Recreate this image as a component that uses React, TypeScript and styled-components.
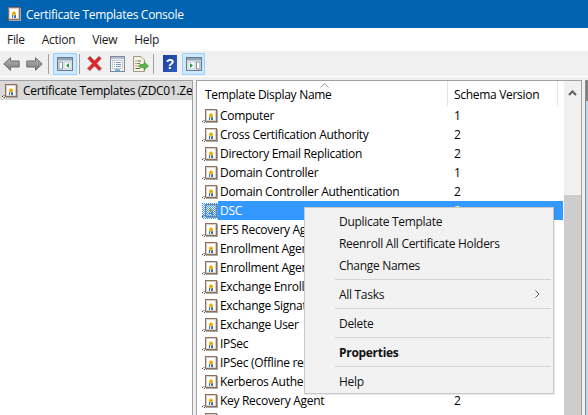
import React from 'react';
import styled, { createGlobalStyle } from 'styled-components';

const Global = createGlobalStyle`
  html, body { margin: 0; padding: 0; background: #f0f0f0; }
  * { box-sizing: border-box; }
`;
const FONT = `"Open Sans", "Noto Sans", "Liberation Sans", sans-serif`;

const Win = styled.div`
  width: 588px; height: 415px; overflow: hidden; display: flex; flex-direction: column;
  font-family: ${FONT}; font-size: 12px; letter-spacing: -0.3px; color: #000; background: #f0f0f0;
`;
const TitleBar = styled.div`
  height: 28px; flex: none; background: #0063b1; color: #fff; display: flex; align-items: center;
  padding-left: 5px; gap: 5px;
`;
const MenuBar = styled.div`
  height: 23px; flex: none; background: #fff; display: flex; align-items: center; padding-left: 7px; gap: 17px;
`;
const MenuLabel = styled.span`color: #1a1a1a;`;
const Toolbar = styled.div`
  height: 25px; flex: none; background: #f0f0f0; display: flex; align-items: center; padding-left: 2px;
`;
const ToolBtn = styled.div<{ $w: number; $active?: boolean; $ml?: number }>`
  width: ${p => p.$w}px; height: 22px; margin-left: ${p => p.$ml ?? 0}px; display: flex; align-items: center; justify-content: center; flex: none;
  background: ${p => (p.$active ? '#cce8ff' : 'transparent')};
  border: 1px solid ${p => (p.$active ? '#99d1ff' : 'transparent')};
`;
const ToolSep = styled.div<{ $ml: number }>`
  width: 1px; height: 20px; background: #a0a0a0; margin-left: ${p => p.$ml}px; flex: none;
`;
const Panes = styled.div`
  flex: 1; min-height: 0; display: flex; padding-top: 4px; background: #f0f0f0; position: relative;
  box-shadow: inset 0 1px 0 #fff;
`;
const TreePane = styled.div`
  width: 193px; flex: none; background: #fff; border-top: 1px solid #a0a0a0; border-right: 1px solid #a0a0a0;
`;
const TreeRow = styled.div`
  height: 19px; background: #d9d9d9; display: flex; align-items: center; padding-left: 2px; gap: 5px; white-space: nowrap; overflow: hidden;
`;
const ListPane = styled.div`
  position: relative; width: 386px; margin-left: 3px; flex: none; background: #fff; display: flex;
  border: 1px solid #a0a0a0; border-bottom: none;
`;
const SidePane = styled.div`
  width: 3px; margin-left: 3px; flex: none; background: #b7d8f2; border-left: 1px solid #8c8c8c; border-top: 1px solid #8c8c8c;
`;
const SideHead = styled.div`height: 20px; background: #7f7f7f;`;
const ListBody = styled.div`flex: 1; min-width: 0; overflow: hidden;`;
const Header = styled.div`
  height: 25px; display: flex; position: relative;
`;
const HeadCell = styled.div<{ $w: number; $pad: number }>`
  width: ${p => p.$w}px; flex: none; padding-left: ${p => p.$pad}px; padding-top: 5px; border-right: 1px solid #e5e5e5; white-space: nowrap;
`;
const SortMark = styled.svg`
  position: absolute; left: 123px; top: 2px;
`;
const Row = styled.div`
  height: 19px; display: flex; align-items: center; padding-left: 5px;
`;
const IconSlot = styled.div`width: 16px; height: 16px; flex: none; display: flex; align-items: center; justify-content: center;`;
const NameCell = styled.div<{ $sel?: boolean }>`
  width: 345px; flex: none; height: 19px; display: flex; align-items: center; padding-left: 2px; white-space: nowrap; position: relative;
  background: ${p => (p.$sel ? '#3399ff' : 'transparent')}; color: ${p => (p.$sel ? '#fff' : '#000')};
`;
const Version = styled.span`position: absolute; left: 236px;`;
const ScrollBar = styled.div`
  width: 17px; flex: none; background: #f0f0f0; display: flex; flex-direction: column; margin-left: -1px;
`;
const ScrollBtn = styled.div`height: 24px; flex: none; display: flex; align-items: center; justify-content: center;`;
const ScrollTrack = styled.div`height: 90px; flex: none;`;
const ScrollThumb = styled.div`flex: 1; background: #cdcdcd;`;
const Menu = styled.div`
  position: absolute; left: 107px; top: 126px; width: 250px; height: 187px; background: #f2f2f2;
  border: 1px solid #c8c8c8; padding: 2px 2px 1px 0; box-shadow: 1px 1px 1px rgba(0,0,0,0.08); color: #111;
`;
const MenuItem = styled.div<{ $bold?: boolean }>`
  height: 22px; display: flex; align-items: center; justify-content: space-between; padding: 0 11px 0 34px;
  font-weight: ${p => (p.$bold ? 700 : 400)}; white-space: nowrap;
`;
const MenuSep = styled.div`height: 1px; background: #d4d4d4; margin: 3px 0 3px 30px;`;

const Cert = ({ sel }: { sel?: boolean }) => (
  <svg width="16" height="16" viewBox="0 0 16 16" style={{ flex: 'none' }}>
    <path d="M0 13.5 H1 M1.5 12.5 H2.5 M2 14.5 H3" stroke="#444" strokeWidth="1" />
    <rect x="3" y="1" width="12" height="13" fill="#8e6f60" />
    <rect x="15" y="2" width="1" height="13" fill="#a8a8a8" />
    <rect x="4" y="14" width="12" height="1" fill="#a8a8a8" />
    <rect x="4" y="2" width="10" height="11" fill="#d9cfc4" />
    <rect x="5" y="3" width="8" height="9" fill="#fff" />
    <rect x="7" y="9" width="1" height="3" fill="#2f6fd0" />
    <rect x="9" y="9" width="2" height="3" fill="#2f6fd0" />
    <path d="M9 5 L11 6.5 L11 8.5 L9 10 L7 8.5 L7 6.5 Z" fill="#f6b91a" />
    <rect x="8.5" y="7" width="1" height="1" fill="#b8720a" />
    {sel && (
      <>
        <defs>
          <pattern id="selp" width="2" height="2" patternUnits="userSpaceOnUse">
            <rect x="0" y="0" width="1" height="1" fill="#3399ff" />
            <rect x="1" y="1" width="1" height="1" fill="#3399ff" />
          </pattern>
        </defs>
        <rect x="0" y="0" width="16" height="16" fill="url(#selp)" />
      </>
    )}
  </svg>
);

const Arrow = ({ flip }: { flip?: boolean }) => (
  <svg width="17" height="14" viewBox="0 0 17 14" style={flip ? { transform: 'scaleX(-1)' } : undefined}>
    <defs>
      <linearGradient id="ga" x1="0" y1="0" x2="0" y2="1">
        <stop offset="0" stopColor="#b4b4b4" />
        <stop offset="1" stopColor="#7d7d7d" />
      </linearGradient>
    </defs>
    <path d="M0.7 7 L7.5 0.7 V4 H16.2 V10 H7.5 V13.3 Z" fill="url(#ga)" stroke="#6e6e6e" strokeWidth="1" strokeLinejoin="round" />
  </svg>
);
const PaneIcon = ({ right }: { right?: boolean }) => (
  <svg width="16" height="14" viewBox="0 0 16 14">
    <rect x="0.5" y="0.5" width="15" height="13" fill="#f4f4f4" stroke="#6b7b8c" />
    <rect x="1" y="1" width="14" height="2.5" fill="#8fa3b8" />
    {right ? (
      <>
        <rect x="2" y="5" width="7" height="7" fill="#fff" stroke="#9ab" strokeWidth="0.6" />
        <rect x="10.5" y="5" width="3.5" height="7" fill="#fff" stroke="#6a7f96" strokeWidth="0.8" />
        <path d="M4 6 L7 8.5 L4 11 Z" fill="#1e9c3a" />
      </>
    ) : (
      <>
        <rect x="2" y="5" width="3.5" height="7" fill="#fff" stroke="#6a7f96" strokeWidth="0.8" />
        <rect x="7" y="5" width="7" height="7" fill="#fff" stroke="#9ab" strokeWidth="0.6" />
        <path d="M12 6 L9 8.5 L12 11 Z" fill="#1e9c3a" />
      </>
    )}
  </svg>
);
const XIcon = () => (
  <svg width="17" height="17" viewBox="0 0 17 17">
    <path d="M1.5 3.5 L4 1 L8.5 5.5 L13 1 L15.5 3.5 L11 8.5 L15.8 13.5 L13.3 16 L8.5 11.3 L3.7 16 L1.2 13.5 L6 8.5 Z" fill="#e0242b" stroke="#aaa" strokeWidth="0.8" />
  </svg>
);
const PropsIcon = () => (
  <svg width="15" height="16" viewBox="0 0 15 16">
    <rect x="0.5" y="0.5" width="14" height="15" fill="#f2f2f2" stroke="#7d8a99" />
    <rect x="1" y="1" width="13" height="2" fill="#b6c0cc" />
    <rect x="2.5" y="4.5" width="10" height="8" fill="#fff" stroke="#b0b8c2" strokeWidth="0.7" />
    <path d="M4 6.5 H5 M6 6.5 H11 M4 8.5 H5 M6 8.5 H11 M4 10.5 H5 M6 10.5 H11" stroke="#5a7ca8" strokeWidth="0.8" />
    <rect x="5" y="13.3" width="5" height="1.4" fill="#2f9fe0" />
  </svg>
);
const ExportIcon = () => (
  <svg width="17" height="16" viewBox="0 0 17 16">
    <path d="M1.5 0.5 H9 L12.5 4 V15.5 H1.5 Z" fill="#f6f3dc" stroke="#9a9a88" />
    <path d="M3.5 5 H4.5 M5.5 5 H9 M3.5 7.5 H4.5 M5.5 7.5 H8 M3.5 10 H4.5 M5.5 10 H8 M3.5 12.5 H8" stroke="#555" strokeWidth="0.9" />
    <path d="M8 8.5 H12 V6 L16.5 10 L12 14 V11.5 H8 Z" fill="#55b848" stroke="#3a8f34" strokeWidth="0.7" />
  </svg>
);
const HelpIcon = () => (
  <svg width="14" height="17" viewBox="0 0 14 17">
    <defs>
      <linearGradient id="gh" x1="0" y1="0" x2="1" y2="1">
        <stop offset="0" stopColor="#1d3f98" />
        <stop offset="1" stopColor="#2b5cc0" />
      </linearGradient>
    </defs>
    <rect x="0" y="0" width="14" height="17" fill="url(#gh)" />
    <text x="7" y="14" textAnchor="middle" fontSize="14" fontWeight="700" fill="#fff" fontFamily="Liberation Sans">?</text>
  </svg>
);

const rows: [string, string][] = [
  ['Computer', '1'],
  ['Cross Certification Authority', '2'],
  ['Directory Email Replication', '2'],
  ['Domain Controller', '1'],
  ['Domain Controller Authentication', '2'],
  ['DSC', '2'],
  ['EFS Recovery Agent', ''],
  ['Enrollment Agent', ''],
  ['Enrollment Agent (Computer)', ''],
  ['Exchange Enrollment Agent', ''],
  ['Exchange Signature Only', ''],
  ['Exchange User', ''],
  ['IPSec', ''],
  ['IPSec (Offline request)', ''],
  ['Kerberos Authentication', ''],
  ['Key Recovery Agent', '2'],
  ['', ''],
];

export default function App() {
  return (
    <Win>
      <Global />
      <TitleBar>
        <Cert />
        <span>Certificate Templates Console</span>
      </TitleBar>
      <MenuBar>
        <MenuLabel>File</MenuLabel>
        <MenuLabel>Action</MenuLabel>
        <MenuLabel>View</MenuLabel>
        <MenuLabel>Help</MenuLabel>
      </MenuBar>
      <Toolbar>
        <ToolBtn $w={19}><Arrow /></ToolBtn>
        <ToolBtn $w={19} $ml={4}><Arrow flip /></ToolBtn>
        <ToolSep $ml={4} />
        <ToolBtn $w={24} $active $ml={4}><PaneIcon /></ToolBtn>
        <ToolSep $ml={2} />
        <ToolBtn $w={19} $ml={5}><XIcon /></ToolBtn>
        <ToolBtn $w={19} $ml={4}><PropsIcon /></ToolBtn>
        <ToolBtn $w={19} $ml={4}><ExportIcon /></ToolBtn>
        <ToolSep $ml={3} />
        <ToolBtn $w={18} $ml={7}><HelpIcon /></ToolBtn>
        <ToolBtn $w={23} $active $ml={3}><PaneIcon right /></ToolBtn>
      </Toolbar>
      <Panes>
        <TreePane>
          <TreeRow><Cert /><span>Certificate Templates (ZDC01.Zero.local)</span></TreeRow>
        </TreePane>
        <ListPane>
          <ListBody>
            <Header>
              <HeadCell $w={251} $pad={8}>Template Display Name</HeadCell>
              <HeadCell $w={110} $pad={6}>Schema Version</HeadCell>
              <SortMark width="9" height="5" viewBox="0 0 9 5"><path d="M0.5 4.5 L4.5 0.5 L8.5 4.5" fill="none" stroke="#999" /></SortMark>
            </Header>
            {rows.map(([name, v], i) => {
              const sel = name === 'DSC';
              return (
                <Row key={i}>
                  <IconSlot><Cert sel={sel} /></IconSlot>
                  <NameCell $sel={sel}>{name}{v && <Version>{v}</Version>}</NameCell>
                </Row>
              );
            })}
          </ListBody>
          <ScrollBar>
            <ScrollBtn>
              <svg width="9" height="6" viewBox="0 0 9 6"><path d="M1 5 L4.5 1.5 L8 5" fill="none" stroke="#606060" strokeWidth="2" /></svg>
            </ScrollBtn>
            <ScrollTrack />
            <ScrollThumb />
          </ScrollBar>
          <Menu>
            <MenuItem>Duplicate Template</MenuItem>
            <MenuItem>Reenroll All Certificate Holders</MenuItem>
            <MenuItem>Change Names</MenuItem>
            <MenuSep />
            <MenuItem>All Tasks
              <svg width="5" height="8" viewBox="0 0 5 8"><path d="M0.5 0.5 L4 4 L0.5 7.5" fill="none" stroke="#555" /></svg>
            </MenuItem>
            <MenuSep />
            <MenuItem>Delete</MenuItem>
            <MenuSep />
            <MenuItem $bold>Properties</MenuItem>
            <MenuSep />
            <MenuItem>Help</MenuItem>
          </Menu>
        </ListPane>
        <SidePane><SideHead /></SidePane>
      </Panes>
    </Win>
  );
}
